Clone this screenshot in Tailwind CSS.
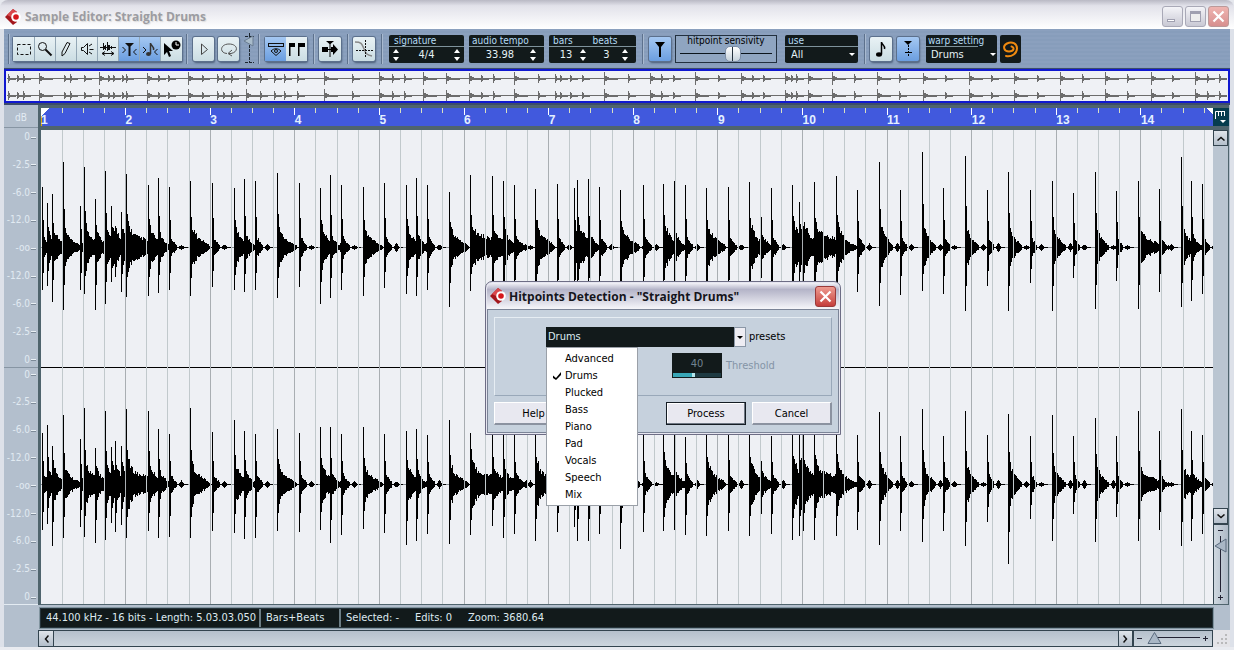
<!DOCTYPE html>
<html lang="en">
<head>
    <meta charset="UTF-8">
    <meta name="viewport" content="width=device-width, initial-scale=1.0">
    <title>Sample Editor: Straight Drums</title>
    <script src="https://cdn.jsdelivr.net/npm/@tailwindcss/browser@4"></script>
    <style>
        .tool {
            display: flex;
            align-items: center;
            justify-content: center;
            height: 24px;
            background: linear-gradient(#e9f2f5, #cbdde3);
        }
        .tool.on {
            background: linear-gradient(#a5c8f2, #6b9ee0);
        }
        .boxed {
            border-radius: 2px;
            box-shadow: 0 0 0 1px #5c708c, 1px 2px 2px #4a5c77;
        }
        .sep {
            width: 1px;
            height: 30px;
            flex: none;
            background: #5d718d;
            box-shadow: 1px 0 0 #a9bad0;
        }
        .sensitivity::-webkit-slider-runnable-track {
            height: 16px;
            background: linear-gradient(#0b141c, #0b141c) center / 100% 1px no-repeat;
        }
        .sensitivity::-webkit-slider-thumb {
            appearance: none;
            width: 16px;
            height: 16px;
            border-radius: 5px;
            border: 1px solid #7d8ea6;
            background: linear-gradient(90deg, transparent 6px, #23303c 6px, #23303c 7px, transparent 7px), linear-gradient(#fff, #c5d1db);
        }
    </style>
</head>
<body class="h-screen overflow-hidden bg-[#e6e8ee] font-['DejaVu_Sans_Condensed','DejaVu_Sans',sans-serif] text-[11px] leading-[14px] text-black">
<div class="relative flex h-full flex-col">

    <!-- Title bar -->
    <header class="flex h-[29px] shrink-0 items-center rounded-t-lg bg-linear-to-b from-[#b9b9c4] via-[#e2e2ea] via-20% to-white pt-[4px] pr-[5px] pl-[4px]">
        <svg class="h-[18px] w-[18px]" viewBox="0 0 18 18"><path d="M1 9 9 1l4 3v10l-4 3z" fill="#a3161c"/><path d="M3 7 9 1l4 3-6 5z" fill="#d9474b"/><circle cx="12" cy="9" r="4.800" fill="#fff"/><circle cx="12" cy="9" r="2.800" fill="#d5181c"/></svg>
        <h1 class="ml-[3px] flex-1 font-['Open_Sans',sans-serif] text-[12px] font-bold text-[#9c9ca2] [text-shadow:1px_1px_1px_#ddd]">Sample Editor: Straight Drums</h1>
        <div class="flex gap-[2px]">
            <button aria-label="Minimize" class="flex h-[21px] w-[21px] items-end rounded-[3px] border border-[#a9a9b7] bg-linear-to-b from-[#f4f4f8] to-[#c9c9d4] p-[4px]"><span class="h-[3px] w-[8px] border border-[#a0a0b0] bg-white"></span></button>
            <button aria-label="Maximize" class="flex h-[21px] w-[21px] items-center justify-center rounded-[3px] border border-[#a9a9b7] bg-linear-to-b from-[#f4f4f8] to-[#c9c9d4]"><span class="h-[11px] w-[11px] border border-t-[3px] border-[#a0a0b0] bg-[#eee]"></span></button>
            <button aria-label="Close" class="flex h-[21px] w-[21px] items-center justify-center rounded-[3px] border border-[#b99] bg-linear-to-b from-[#efb4b0] to-[#d79090]"><svg class="h-[13px] w-[13px]" viewBox="0 0 13 13"><path d="M1.500 1.500l10 10m0-10l-10 10" stroke="#fff" stroke-width="2.200"/></svg></button>
        </div>
    </header>

    <div class="flex min-h-0 flex-1 flex-col border-x-[4px] border-[#dde1e9] bg-[#b3bfcd]">

        <!-- Toolbar -->
        <div class="flex h-[39px] shrink-0 items-center bg-[repeating-linear-gradient(#8ba0be_0_2px,#879dbb_2px_4px)] pl-[4px] text-[#b7dcf5]">
            <span class="sep"></span>
            <div class="boxed ml-[4px] flex gap-px bg-[#93a7b5]">
                <button aria-label="Range selection" class="tool w-[21px]"><svg class="h-[16px] w-[16px]" viewBox="0 0 16 16" fill="none" stroke="#111"><rect x="1.500" y="3.500" width="13" height="10" stroke-dasharray="3 2"/></svg></button>
                <button aria-label="Zoom" class="tool w-[20px]"><svg class="h-[16px] w-[16px]" viewBox="0 0 16 16" fill="none" stroke="#111"><circle cx="5.500" cy="5.500" r="4"/><path d="M8.500 8.500l6 6" stroke-width="2"/></svg></button>
                <button aria-label="Draw" class="tool w-[20px]"><svg class="h-[16px] w-[16px]" viewBox="0 0 16 16" fill="none" stroke="#111"><path d="M9 1.500l3 1-5 10-3 2.500v-4z"/></svg></button>
                <button aria-label="Play" class="tool w-[20px]"><svg class="h-[16px] w-[16px]" viewBox="0 0 16 16" fill="none" stroke="#111"><path d="M2.500 6.500h2l4-4v11l-4-4h-2zM10 5l3-2M10.500 8.500h4M10 11l3 2"/></svg></button>
                <button aria-label="Scrub" class="tool w-[20px]"><svg class="h-[16px] w-[16px]" viewBox="0 0 16 16" fill="none" stroke="#111"><path d="M0 6.500h16M3.500 2v7M5.500 4v5M7.500 1v9M9.500 4v5M11.500 5v3M4.500 5v3M8.500 4v5"/><path d="M2 12.500h12M5 10.500l-3 2 3 2M11 10.500l3 2-3 2"/></svg></button>
                <button aria-label="Hitpoint edit" class="tool on w-[20px]"><svg class="h-[16px] w-[16px]" viewBox="0 0 16 16"><path d="M4 2h9L9.500 5.500V15h-2V5.500z" fill="#111"/><path d="M1.500 6l3 3-3 3M15.500 8l-3 3 3 3" fill="none" stroke="#111"/></svg></button>
                <button aria-label="Warp samples" class="tool on w-[20px]"><svg class="h-[16px] w-[16px]" viewBox="0 0 16 16"><ellipse cx="6.500" cy="13" rx="2.500" ry="2" fill="#333"/><path d="M8.500 13V2c0 3 4 3 3 7" fill="none" stroke="#333" stroke-width="1.500"/><path d="M1 6l3 3-3 3M15.500 8l-3 3 3 3" fill="none" stroke="#111"/></svg></button>
                <button aria-label="Time warp" class="tool w-[21px]"><svg class="h-[18px] w-[18px]" viewBox="0 0 18 18"><path d="M1 3v12l3-3 2 5 2-1-2-5h4z"/><circle cx="13" cy="5" r="4.500"/><path d="M13 2v3h3" stroke="#fff" fill="none"/></svg></button>
            </div>
            <span class="sep ml-[4px]"></span>
            <button aria-label="Audition" class="tool boxed ml-[6px] w-[21px]"><svg class="h-[16px] w-[16px]" viewBox="0 0 16 16"><path d="M5.500 3l6 5.500-6 5z" fill="none" stroke="#444"/></svg></button>
            <button aria-label="Audition loop" class="tool boxed ml-[4px] w-[21px]"><svg class="h-[18px] w-[18px]" viewBox="0 0 18 18" fill="none" stroke="#555"><path d="M7 13.500C-1 13 0 4 9 4s10 8 2 9.500H9M12 10l-4 3.500 4 2.500"/></svg></button>
            <label class="relative ml-[3px] h-[32px] w-[14px]">
                <svg class="h-full w-full" viewBox="0 0 14 32"><path d="M7.500 0v30M3 3.500h9M3 29.500h9" stroke="#1c2630" stroke-dasharray="3 1"/><path d="M2 8l9-5v10z" fill="#a9bccb" stroke="#6a7d92"/></svg>
                <input type="range" aria-label="Audition volume" class="absolute inset-0 w-full opacity-0">
            </label>
            <span class="sep ml-[2px]"></span>
            <div class="boxed ml-[6px] flex">
                <button aria-label="Snap to zero" class="tool on w-[21px]"><svg class="h-[18px] w-[18px]" viewBox="0 0 18 18" fill="none" stroke="#111"><rect x="1.500" y="3.500" width="15" height="3"/><path d="M4 11c3-3 7-3 10 0l-5 4.500z"/><circle cx="9" cy="11" r="1.500"/></svg></button>
                <button aria-label="Show regions" class="tool w-[21px]"><svg class="h-[18px] w-[18px]" viewBox="0 0 18 18"><path d="M1 3h6v4H2.500v9H1zM10 3h7v4h-5.500v9H10z"/></svg></button>
            </div>
            <span class="sep ml-[6px]"></span>
            <button aria-label="Autoscroll" class="tool boxed ml-[5px] w-[22px]"><svg class="h-[18px] w-[18px]" viewBox="0 0 18 18"><path d="M1 7h6v5H1zM10 7h2V4l5 5.500-5 5.500v-3h-2zM5 1h8L9.500 4v13h-1V4z"/><path d="M6 9.500h6" stroke="#000"/></svg></button>
            <span class="sep ml-[6px]"></span>
            <button aria-label="Snap" class="tool boxed ml-[5px] w-[22px]"><svg class="h-[20px] w-[20px]" viewBox="0 0 20 20" fill="none"><path d="M1 3c7 0 7 2 9 7s3 6 8 7" stroke="#888" stroke-width="1.500"/><path d="M11.500 1v18M2 11.500h17" stroke="#111" stroke-dasharray="2 1"/></svg></button>
            <span class="sep ml-[6px]"></span>

            <div class="ml-[7px] h-[28px] w-[75px] rounded-[2px] bg-[#121a1b]">
                <label for="signature" class="block h-[12px] border-b border-[#7e929b] pl-[5px] text-[10px] leading-[12px]">signature</label>
                <div class="flex h-[16px] items-center justify-between px-[4px]">
                    <svg class="h-[12px] w-[6px]" viewBox="0 0 6 12" fill="#fff"><path d="M0 4l3-4 3 4zM0 8h6l-3 4z"/></svg>
                    <input id="signature" value="4/4" class="w-[30px] bg-transparent text-center text-[#e4f1f5]">
                    <svg class="h-[12px] w-[6px]" viewBox="0 0 6 12" fill="#fff"><path d="M0 4l3-4 3 4zM0 8h6l-3 4z"/></svg>
                </div>
            </div>
            <div class="ml-[5px] h-[28px] w-[75px] rounded-[2px] bg-[#121a1b]">
                <label for="tempo" class="block h-[12px] border-b border-[#7e929b] pl-[3px] text-[10px] leading-[12px]">audio tempo</label>
                <div class="flex h-[16px] items-center justify-end pr-[8px]">
                    <input id="tempo" value="33.98" class="mr-[12px] w-[36px] bg-transparent text-center text-[#e4f1f5]">
                    <svg class="h-[12px] w-[6px]" viewBox="0 0 6 12" fill="#fff"><path d="M0 4l3-4 3 4zM0 8h6l-3 4z"/></svg>
                </div>
            </div>
            <div class="ml-[5px] grid h-[28px] w-[87px] grid-cols-2 rounded-[2px] bg-[#121a1b]">
                <label for="bars" class="block h-[12px] border-b border-[#7e929b] pl-[4px] text-[10px] leading-[12px]">bars</label>
                <label for="beats" class="block h-[12px] border-b border-[#7e929b] text-[10px] leading-[12px]">beats</label>
                <div class="flex h-[16px] items-center pl-[8px]">
                    <input id="bars" value="13" class="w-[18px] bg-transparent text-center text-[#e4f1f5]">
                    <svg class="ml-[5px] h-[12px] w-[6px]" viewBox="0 0 6 12" fill="#fff"><path d="M0 4l3-4 3 4zM0 8h6l-3 4z"/></svg>
                </div>
                <div class="flex h-[16px] items-center pl-[5px]">
                    <input id="beats" value="3" class="w-[18px] bg-transparent text-center text-[#e4f1f5]">
                    <svg class="ml-[6px] h-[12px] w-[6px]" viewBox="0 0 6 12" fill="#fff"><path d="M0 4l3-4 3 4zM0 8h6l-3 4z"/></svg>
                </div>
            </div>
            <span class="sep ml-[6px]"></span>
            <button aria-label="Hitpoint mode" class="tool on boxed ml-[6px] w-[22px]"><svg class="h-[18px] w-[18px]" viewBox="0 0 18 18"><path d="M4 2h10l-4 5v10H8V7z"/></svg></button>
            <div class="ml-[4px] flex h-[28px] w-[102px] flex-col border border-[#22303f] bg-[#8fa5c1] px-[4px] text-black">
                <label for="sensitivity" class="text-center text-[10px] leading-[10px]">hitpoint sensivity</label>
                <input id="sensitivity" type="range" value="59" class="sensitivity h-[16px] w-full appearance-none bg-transparent">
            </div>
            <div class="ml-[8px] h-[28px] w-[73px] rounded-[2px] bg-[#121a1b]">
                <label for="use" class="block h-[12px] border-b border-[#7e929b] pl-[3px] text-[10px] leading-[12px]">use</label>
                <div class="flex h-[16px] items-center pr-[3px]">
                    <select id="use" class="min-w-0 flex-1 appearance-none bg-[#121a1b] pl-[6px] text-[#e4f1f5]"><option>All</option></select>
                    <svg class="h-[3px] w-[6px]" viewBox="0 0 6 3" fill="#fff"><path d="M0 0h6L3 3z"/></svg>
                </div>
            </div>
            <span class="sep ml-[6px]"></span>
            <button aria-label="Warp mode" class="tool boxed ml-[5px] w-[22px]"><svg class="h-[18px] w-[18px]" viewBox="0 0 18 18"><ellipse cx="7" cy="14.500" rx="3" ry="2.200"/><path d="M9.500 14.500V2c0 3 4 3 3 7" fill="none" stroke="#000" stroke-width="1.500"/></svg></button>
            <button aria-label="Warp tabs" class="tool on boxed ml-[5px] w-[22px]"><svg class="h-[18px] w-[18px]" viewBox="0 0 18 18"><path d="M5 1h8L9 5z"/><path d="M9.500 5v12" stroke="#000" stroke-dasharray="2 1"/><path d="M6 12.500h7" stroke="#000"/></svg></button>
            <div class="ml-[7px] h-[28px] w-[71px] rounded-[2px] bg-[#121a1b]">
                <label for="warp" class="block h-[12px] w-[52px] border-b border-[#7e929b] pl-[2px] text-[10px] leading-[12px] whitespace-nowrap">warp setting</label>
                <div class="flex h-[16px] items-center pr-[1px]">
                    <select id="warp" class="min-w-0 flex-1 appearance-none bg-[#121a1b] pl-[5px] text-[#e4f1f5]"><option>Drums</option></select>
                    <svg class="h-[3px] w-[6px]" viewBox="0 0 6 3" fill="#fff"><path d="M0 0h6L3 3z"/></svg>
                </div>
            </div>
            <button aria-label="Musical mode" class="ml-[3px] flex h-[28px] w-[21px] items-center justify-center rounded-[2px] bg-[#121a1b]"><svg class="h-[18px] w-[17px]" viewBox="0 0 17 18" fill="none" stroke="#ee8a10" stroke-width="2" stroke-linecap="round"><path d="M4 16C10 17 15 13.500 15 8.500S10 1 5 3.500 2 11.500 7 11.500s6-4 2.500-5"/></svg></button>
        </div>

        <!-- Overview -->
        <div class="h-[37px] shrink-0 border-t border-b-2 border-[#3c4c6b] bg-[#1018d0] p-[2px]">
            <svg id="overview" class="h-full w-full bg-[#eff1f5]" viewBox="0 0 1222 30" preserveAspectRatio="none" shape-rendering="crispEdges"></svg>
        </div>

        <!-- Ruler -->
        <div class="flex h-[22px] shrink-0">
            <div class="w-[34px] bg-[#b3bfcd] pt-[6px] text-center text-[10px] text-[#e3ecf4]">dB</div>
            <div class="relative flex min-w-0 flex-1 border-t-[3px] border-b border-l-[3px] border-[#4f646d] bg-[#4159dd]">
                <svg id="ruler" class="absolute inset-0 h-full w-full" viewBox="0 0 1172 18" preserveAspectRatio="none" shape-rendering="crispEdges"></svg>
                <div id="numbers" class="relative flex min-w-0 flex-1 items-end font-['Liberation_Sans',sans-serif] text-[12px] leading-[12px] font-bold text-[#e3f0ff]"></div>
            </div>
            <button aria-label="Ruler format" class="mr-[1px] w-[16px] border-t-[3px] border-b border-[#4f646d] bg-[#063c4e]"><svg class="h-[18px] w-[15px]" viewBox="0 0 15 18"><path d="M2.500 11V3.500h9.500M5.500 8V4M8.500 8V4M11.500 8V4" fill="none" stroke="#fff"/><path d="M7 12h6l-3 3z" fill="#fff"/></svg></button>
        </div>

        <!-- Waveform -->
        <div class="flex min-h-0 flex-1">
            <div class="grid w-[34px] grid-rows-2 border-t border-[#8795a3] pt-[2px] text-[10px] leading-[14px] text-[#e1eaf2]" id="scale"></div>
            <div class="relative min-w-0 flex-1 border-t-[3px] border-b border-l-[3px] border-[#4f646d] bg-[#eef0f4]">
                <svg id="wave" class="absolute inset-0 h-full w-full" viewBox="0 0 1172 474" preserveAspectRatio="none" shape-rendering="crispEdges"></svg>
            </div>
            <div class="mr-[1px] flex w-[16px] flex-col border-t-[3px] border-r border-b border-[#4f646d] bg-[#bac5d1]">
                <button aria-label="Scroll up" class="flex h-[16px] items-center justify-center border border-[#33444f] bg-linear-to-b from-[#dfe4ea] to-[#b4bfcb]"><svg class="h-[5px] w-[8px]" viewBox="0 0 8 5" fill="none" stroke="#111" stroke-width="1.500"><path d="M.5 4.500l3.500-3 3.500 3"/></svg></button>
                <div class="flex-1"></div>
                <button aria-label="Scroll down" class="flex h-[16px] items-center justify-center border border-[#33444f] bg-linear-to-b from-[#dfe4ea] to-[#b4bfcb]"><svg class="h-[5px] w-[8px]" viewBox="0 0 8 5" fill="none" stroke="#111" stroke-width="1.500"><path d="M.5 .5l3.500 3 3.500-3"/></svg></button>
                <label class="relative h-[80px] border-t border-l border-[#33444f] bg-linear-to-r from-[#cfd8e0] to-[#aebac7]">
                    <svg class="h-[78px] w-[14px]" viewBox="0 0 14 78" fill="none" stroke="#223"><path d="M4 5.500h5M6.500 11v56M4 72.500h5M6.500 70v5"/><path d="M1 21l11-7v13z" fill="#a9b7c6" stroke="#5a6b7e"/></svg>
                    <input type="range" aria-label="Vertical zoom" class="absolute inset-0 h-full w-full opacity-0">
                </label>
            </div>
        </div>

        <!-- Info line -->
        <div class="flex h-[25px] shrink-0 pt-[3px] pr-[17px] pb-[2px] pl-[36px] text-[#dfeaf0]">
            <div class="flex min-w-0 flex-1 items-center border border-[#26343b] bg-[#121a1b] whitespace-nowrap outline-1 outline-[#8295a0]">
                <span class="w-[218px] pl-[5px]">44.100 kHz - 16 bits - Length: 5.03.03.050</span>
                <span class="flex h-full w-[80px] items-center border-l-2 border-[#6c7d85] pl-[5px]">Bars+Beats</span>
                <span class="flex h-full items-center gap-[16px] border-l-2 border-[#6c7d85] pl-[5px]"><span>Selected: -</span><span>Edits: 0</span><span>Zoom: 3680.64</span></span>
            </div>
        </div>

        <!-- Horizontal scrollbar -->
        <div class="flex h-[17px] shrink-0 pl-[34px]">
            <div class="flex min-w-0 flex-1 border border-[#33444f] bg-linear-to-b from-[#b5c0cc] to-[#cdd6de]">
                <button aria-label="Scroll left" class="flex w-[15px] items-center justify-center border-r border-[#33444f] bg-linear-to-b from-[#dfe4ea] to-[#b4bfcb]"><svg class="h-[8px] w-[5px]" viewBox="0 0 5 8" fill="none" stroke="#111" stroke-width="1.500"><path d="M4.500 .5L1.500 4l3 3.500"/></svg></button>
                <div class="flex-1"></div>
                <button aria-label="Scroll right" class="flex w-[15px] items-center justify-center border-x border-[#33444f] bg-linear-to-b from-[#dfe4ea] to-[#b4bfcb]"><svg class="h-[8px] w-[5px]" viewBox="0 0 5 8" fill="none" stroke="#111" stroke-width="1.500"><path d="M.5 .5l3 3.500-3 3.500"/></svg></button>
                <label class="relative w-[79px] border-l border-[#33444f]">
                    <svg class="h-[15px] w-[78px]" viewBox="0 0 78 15" fill="none" stroke="#223"><path d="M3 7.500h5M22 6.500h44M69 7.500h5M71.500 5v5"/><path d="M14 12.500l6.500-11 6.500 11z" fill="#a9b7c6" stroke="#5a6b7e"/></svg>
                    <input type="range" aria-label="Horizontal zoom" class="absolute inset-0 w-full opacity-0">
                </label>
            </div>
            <div class="w-[17px] bg-[#e4e4e8]"><svg class="h-[17px] w-[17px]" viewBox="0 0 17 17" fill="#b9b9ba"><path d="M12 4h2v2h-2zM8 8h2v2H8zM12 8h2v2h-2zM4 12h2v2H4zM8 12h2v2H8zM12 12h2v2h-2z"/></svg></div>
        </div>
    </div>
    <div class="h-[3px] shrink-0 bg-[#e9ebf0]"></div>

    <!-- Hitpoints dialog -->
    <section role="dialog" aria-labelledby="dialogTitle" class="absolute top-[281px] left-[485px] w-[356px] rounded-t-[7px] border border-[#6d6d85] bg-[#e6e6f0] p-px">
        <div class="flex h-[26px] items-center rounded-t-[6px] bg-linear-to-b from-[#f2f2f8] via-[#b4b4c8] via-25% to-[#f6f6fa] pr-[3px] pl-[2px]">
            <svg class="h-[18px] w-[18px]" viewBox="0 0 18 18"><path d="M1 9 9 1l4 3v10l-4 3z" fill="#a3161c"/><path d="M3 7 9 1l4 3-6 5z" fill="#d9474b"/><circle cx="12" cy="9" r="4.800" fill="#fff"/><circle cx="12" cy="9" r="2.800" fill="#d5181c"/></svg>
            <h2 id="dialogTitle" class="ml-[2px] flex-1 pt-px font-['Open_Sans',sans-serif] text-[12px] font-bold text-[#15151c]">Hitpoints Detection - "Straight Drums"</h2>
            <button aria-label="Close dialog" class="flex h-[21px] w-[21px] items-center justify-center rounded-[3px] border border-[#9a3a3a] bg-linear-to-b from-[#ee9a90] to-[#c43c3c]"><svg class="h-[13px] w-[13px]" viewBox="0 0 13 13"><path d="M1.500 1.500l10 10m0-10l-10 10" stroke="#fff" stroke-width="2.200"/></svg></button>
        </div>
        <div class="border border-[#7b8497] bg-[#c6d1dd] px-[6px] pt-[7px] pb-[7px]">
            <div class="h-[79px] border border-[#99a8b9] border-t-[#e6edf3] border-l-[#e6edf3] pt-[9px] pl-[51px]">
                <div class="flex items-center">
                    <select id="presets" class="h-[20px] w-[188px] appearance-none bg-[#121a1b] pl-[2px] text-[#dceaf0]"><option>Drums</option></select>
                    <span class="flex h-[20px] w-[12px] items-center justify-center border border-[#8b97a6] bg-[#eeedf3]"><svg class="h-[3px] w-[6px]" viewBox="0 0 6 3"><path d="M0 0h6L3 3z"/></svg></span>
                    <label for="presets" class="ml-[3px]">presets</label>
                </div>
                <div class="mt-[6px] flex items-center pl-[126px] text-[#8494a6]">
                    <div class="h-[25px] w-[50px] bg-[#121a1b] p-px">
                        <input id="threshold" value="40" class="block h-[19px] w-full bg-transparent text-center text-[#718391]">
                        <div class="flex h-[4px] bg-[#1e3a42]"><span class="h-full bg-[#38a6b6]" style="width: 40%"></span><span class="h-full w-[3px] bg-[#b5e6ec]"></span></div>
                    </div>
                    <label for="threshold" class="ml-[4px]">Threshold</label>
                </div>
            </div>
            <div class="mt-[6px] flex gap-[6px]">
                <button class="h-[23px] w-[80px] border-t border-r-2 border-b-2 border-l border-t-white border-r-[#8b92a0] border-b-[#8b92a0] border-l-white bg-[#e8e8f0] pt-px">Help</button>
                <button class="ml-auto h-[23px] w-[80px] border border-[#141c24] bg-[#e8e8f0] shadow-[inset_-1px_-1px_0_#6f7884,inset_1px_1px_0_#fff]">Process</button>
                <button class="h-[23px] w-[80px] border-t border-r-2 border-b-2 border-l border-t-white border-r-[#8b92a0] border-b-[#8b92a0] border-l-white bg-[#e8e8f0] pt-px">Cancel</button>
            </div>
        </div>
        <!-- Open preset menu -->
        <ul role="listbox" aria-label="Preset list" class="absolute top-[65px] left-[60px] w-[92px] border border-[#9aa0a8] bg-white py-[2px] leading-[17px]">
            <li role="option" class="pl-[18px]">Advanced</li>
            <li role="option" aria-selected="true" class="relative pl-[18px]"><svg class="absolute top-[5px] left-[6px] h-[8px] w-[8px]" viewBox="0 0 8 8"><path d="M0 3.500l3 2.500 5-6v3L3 8 0 6z"/></svg>Drums</li>
            <li role="option" class="pl-[18px]">Plucked</li>
            <li role="option" class="pl-[18px]">Bass</li>
            <li role="option" class="pl-[18px]">Piano</li>
            <li role="option" class="pl-[18px]">Pad</li>
            <li role="option" class="pl-[18px]">Vocals</li>
            <li role="option" class="pl-[18px]">Speech</li>
            <li role="option" class="pl-[18px]">Mix</li>
        </ul>
    </section>
</div>

<script>
    // position, left channel up/down, right channel up/down, body, decay length
    const hits = [
        [1,60,42,51,45,16,7],[6,44,38,59,39,24,16],[11,53,54,38,61,28,14],[22,85,62,69,53,26,18],[39,41,42,45,42,10,5],
        [43,80,46,76,52,34,20],[54,48,62,36,58,24,15],[64,76,56,73,55,26,22],[70,41,34,37,38,26,20],[74,21,29,43,47,24,20],
        [80,35,44,38,40,24,20],[85,73,49,75,53,38,36],[107,62,48,73,46,30,20],[117,69,45,55,53,20,12],[128,60,42,50,52,14,8],
        [149,66,48,76,53,34,20],[171,64,39,52,46,14,8],[193,59,42,64,48,30,16],[203,68,44,53,54,20,11],[214,66,42,50,53,16,8],
        [236,74,50,55,46,30,20],[258,64,39,51,47,16,8],[279,59,56,57,45,32,16],[289,72,50,57,58,18,10],[300,62,42,50,50,16,9],
        [322,60,48,57,44,28,20],[343,64,40,50,48,16,8],[365,62,46,53,60,30,16],[375,69,48,55,56,20,10],[386,62,42,49,49,16,8],
        [408,55,59,64,59,30,20],[429,72,43,51,50,38,52],[451,71,56,59,41,28,22],[462,66,56,56,53,24,18],[473,62,54,49,49,16,12],
        [494,58,56,59,56,36,20],[516,63,54,50,47,14,8],[533,59,54,50,42,22,14],[536,67,54,59,56,38,20],[547,68,50,54,56,20,12],
        [558,60,46,49,49,16,8],[579,57,56,59,64,34,20],[602,62,48,51,47,16,9],[622,63,50,59,46,36,18],[633,66,50,54,45,20,12],
        [644,62,46,47,50,16,8],[665,59,56,59,51,34,20],[687,60,54,54,46,16,9],[708,65,60,59,51,36,16],[719,66,50,50,49,20,12],
        [730,59,60,48,49,16,8],[751,62,60,59,55,38,30],[758,45,40,54,51,34,26],[762,21,40,54,46,34,26],[773,65,56,56,55,38,44],
        [795,71,62,64,51,34,18],[816,57,44,49,45,16,8],[838,85,58,72,60,34,14],[859,57,47,48,46,14,7],[881,95,43,75,57,30,14],
        [902,59,46,48,46,14,7],[924,91,63,73,61,30,14],[946,57,38,49,37,14,7],[967,75,63,70,79,30,14],[989,57,35,48,34,14,7],
        [1011,66,63,69,56,30,14],[1032,54,30,48,29,14,7],[1054,75,61,66,57,28,14],[1075,56,33,48,32,14,7],[1097,66,61,73,56,30,26],
        [1118,58,44,53,45,14,8],[1140,90,59,75,61,28,22],[1150,66,53,53,56,18,12],[1161,63,46,49,49,14,8]
    ];
    const width = 1172;
    const noise = n => Math.abs(Math.sin(n * 12.9898) * 43758.5453 % 1);

    function channel(mid, up, down, seed) {
        const top = new Array(width).fill(-1);
        const bottom = new Array(width).fill(-1);
        hits.forEach(h => {
            const [x, , , , , body, length] = h;
            for (let i = 0; i <= length + 10 && x + i < width; i++) {
                let a = 0;
                if (i < length) {
                    a = body * (0.35 * Math.pow(1 - i / length, 0.7) + 0.65 * Math.exp(-i / 3)) * (0.75 + 0.4 * noise(x + i + seed));
                } else {
                    // small echo after the hit
                    a = (1.5 + 3 * noise(x + seed)) * Math.max(0, 1 - Math.abs(i - length - 4) / 3);
                }
                let t = a, b = a * 0.95;
                if (i === 0) { t = h[up]; b = h[down]; }
                if (i === 1) { t = Math.max(a, h[up] * 0.45); b = Math.max(a, h[down] * 0.6); }
                top[x + i] = Math.max(top[x + i], t);
                bottom[x + i] = Math.max(bottom[x + i], b);
            }
        });
        return top.map((t, x) => t < 0 ? '' : `M${x}.5 ${mid - Math.round(t)}V${mid + 1 + Math.round(bottom[x])}`).join('');
    }

    let grid = '', ticks = '', numbers = '';
    for (let i = 1; i < 56; i++) {
        const x = Math.floor(21.15 * i) + 0.5;
        const bar = i % 4 === 0;
        grid += `<path d="M${x} 0V474" stroke="${bar ? '#a9aeb2' : '#c1c9cc'}"/>`;
        ticks += `<path d="M${x} 0V${bar ? 7 : 5}" stroke="${bar ? '#ffffff' : '#d9dfc0'}"/>`;
    }
    for (let i = 1; i <= 14; i++) {
        numbers += `<span class="${i < 14 ? 'w-[7.22%] shrink-0' : 'flex-1'}">${i}</span>`;
    }
    document.getElementById('wave').innerHTML =
        `<path d="M0 117.500H1172M0 354.500H1172" stroke="#8a9094"/>
         <path d="M0 237.500H1172" stroke="#000"/>
         <path d="${channel(117, 1, 2, 0)}${channel(354, 3, 4, 31)}" stroke="#000"/>${grid}`;
    document.getElementById('ruler').innerHTML =
        ticks + '<path d="M0 0h8L1 7v11H0z" fill="#fff"/><path d="M0 8h1v10H0z" fill="#e0b000"/><path d="M1165 0h7v7z" fill="#fff"/>';
    document.getElementById('numbers').innerHTML = numbers;

    // dB scale, one column of labels per channel
    const levels = ['0', '-2.5', '-6.0', '-12.0', '-oo', '-12.0', '-6.0', '-2.5', '0'];
    const labels = levels.map(l => `<div class="flex items-center justify-end gap-px"><span>${l}</span><span class="h-px w-[5px] bg-[#e9f0f5] shadow-[0_1px_0_#7d8b99]"></span></div>`).join('');
    document.getElementById('scale').innerHTML =
        `<div class="flex flex-col justify-between border-b border-[#8795a3] pr-[2px]">${labels}</div>
         <div class="flex flex-col justify-between border-b border-[#e3ebf2] pr-[2px]">${labels}</div>`;

    // Overview strip
    const marks = [8,17,23,39,64,70,84,99,108,113,122,126,147,158,168,188,202,217,223,231,246,260,274,284,297,324,352,379,392,404,423,446,469,481,493,514,538,555,560,570,582,604,628,650,661,673,695,718,741,752,763,785,791,796,808,832,854,877,899,923,945,969,991,1014,1037,1060,1082,1105,1127,1151,1172,1195,1207,1219];
    const strong = [39,99,147,188,246,324,379,423,446,469,514,604,650,695,741,785,808,832,877,923,969,1014,1060,1105,1151,1195];
    let strip = '';
    [7, 24].forEach(y => {
        marks.forEach((m, i) => {
            const x = m - 6, big = strong.includes(m);
            const a = (big ? 5 : 3) + Math.round(noise(i + 1));
            strip += `M${x}.5 ${y - a}V${y + a + 1}M${x + 1}.5 ${y - 2}V${y + 3}`;
            if (big) {
                strip += `M${x + 2}.5 ${y - 2}V${y + 3}M${x + 3}.5 ${y - 1}V${y + 2}M${x + 4}.5 ${y - 1}V${y + 2}`;
            }
            strip += `M${x} ${y + 1}.5h${big ? 14 : 8}`;
        });
        strip += `M1 ${y}.5H1221`;
    });
    document.getElementById('overview').innerHTML = `<path d="${strip}" stroke="#6c6c6c"/>`;
</script>
</body>
</html>
